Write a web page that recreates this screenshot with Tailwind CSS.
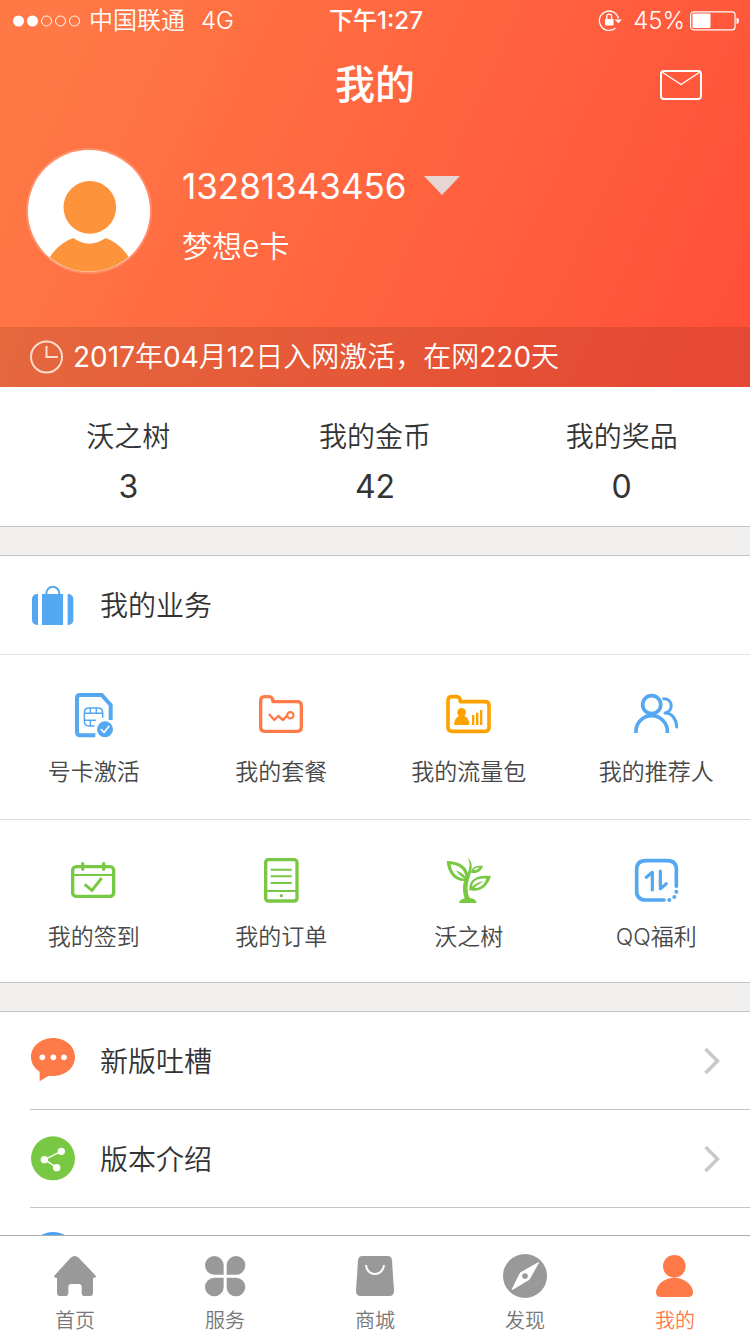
<!DOCTYPE html>
<html lang="zh-CN">
<head>
<meta charset="utf-8">
<meta name="viewport" content="width=device-width, initial-scale=1">
<title>我的</title>
<script src="https://cdn.jsdelivr.net/npm/@tailwindcss/browser@4"></script>
</head>
<body class="flex h-screen flex-col overflow-hidden bg-white font-['Inter','Noto_Sans_CJK_SC',sans-serif] font-[350] text-[#333333]">
<main class="min-h-0 flex-1 overflow-hidden">
  <header class="bg-[linear-gradient(115deg,#ff7946_6%,#ff5139_94%)] text-white">
    <!-- Status bar -->
    <div class="grid h-[42px] grid-cols-3 items-center pr-[10px] pl-3 text-2xl leading-10">
      <div class="flex items-center gap-2">
        <svg class="h-3 w-[69px]" viewBox="0 0 69 12" fill="none" stroke="#fff"><circle cx="6.500" cy="6" r="5.500" fill="#fff" stroke="none"/><circle cx="20.500" cy="6" r="5.500" fill="#fff" stroke="none"/><circle cx="34.500" cy="6" r="5"/><circle cx="48.500" cy="6" r="5"/><circle cx="62.500" cy="6" r="5"/></svg>
        <span class="whitespace-nowrap">中国联通</span>
        <span class="ml-2">4G</span>
      </div>
      <div class="text-center font-medium">下午1:27</div>
      <div class="flex items-center justify-end">
        <svg class="mr-[11px] h-6 w-6" viewBox="0 0 24 24" fill="none" stroke="#fff" stroke-width="1.300"><path d="M20.500 9.500A9.700 9.700 0 1 0 17.500 19" /><path d="M16.500 10.500h7.500l-3.700 3.800z" fill="#fff" stroke="none"/><rect x="7" y="10" width="8.500" height="6.500" fill="#fff" stroke="none"/><path d="M8.800 10V7.500a2.400 2.400 0 0 1 4.800 0V10"/></svg>
        <span class="mr-[5px]">45%</span>
        <svg class="h-5 w-[50px]" viewBox="0 0 50 20"><rect x=".600" y=".800" width="44.500" height="18" rx="3" fill="none" stroke="#fff" stroke-width="1.200"/><rect x="2.500" y="2.600" width="18" height="14.500" rx="1" fill="#fff"/><path d="M46.500 6.500c3.300 1 3.300 5.800 0 6.800z" fill="#fff"/></svg>
      </div>
    </div>
    <!-- Title bar -->
    <div class="grid h-[86px] grid-cols-3 items-center pr-[47px]">
      <span></span>
      <h1 class="ml-[47px] text-center text-[40px] leading-[56px] font-medium">我的</h1>
      <button type="button" aria-label="消息" class="justify-self-end">
        <svg class="h-8 w-11" viewBox="0 0 44 32" fill="none" stroke="#fff" stroke-width="2" stroke-linejoin="round"><rect x="2" y="2" width="40" height="28" rx="3"/><path d="M3 3l19 12.500L41 3" stroke-width="1.400"/></svg>
      </button>
    </div>
    <!-- Account -->
    <div class="flex items-start px-[26px] pt-5 pb-[53px]">
      <svg class="h-[126px] w-[126px] shrink-0" viewBox="0 0 378 378"><defs><clipPath id="face"><circle cx="189" cy="189" r="182"/></clipPath></defs><circle cx="189" cy="189" r="189" fill="#fff" fill-opacity=".2"/><circle cx="189" cy="189" r="183" fill="#fff"/><g fill="#fd933b"><circle cx="191.500" cy="178" r="79"/><path clip-path="url(#face)" d="M142 270Q190 304 239 270C272 282 295 305 311 332V390H69V332C85 305 108 282 142 270z"/></g></svg>
      <div class="ml-[30px] pt-[18px]">
        <button type="button" class="flex h-10 items-center gap-[17px] text-[35px] leading-10 font-normal">
          <span>13281343456</span>
          <svg class="h-5 w-9" viewBox="0 0 36 20"><path d="M0 0h36L18 19z" fill="#e6d5d2"/></svg>
        </button>
        <p class="mt-5 text-[30px] leading-10">梦想e卡</p>
      </div>
    </div>
    <div class="flex h-[60px] items-center gap-[10px] bg-black/10 px-[29px] text-[28px] leading-10">
      <svg class="h-[34px] w-[34px] shrink-0" viewBox="0 0 34 34" fill="none" stroke="#ffdcd0" stroke-width="2"><circle cx="17.500" cy="17" r="15.500"/><path d="M17.500 6v11h11.500"/></svg>
      <p><span class="font-normal">2017</span>年<span class="font-normal">04</span>月<span class="font-normal">12</span>日入网激活，在网<span class="font-normal">220</span>天</p>
    </div>
  </header>

  <section class="grid grid-cols-3 border-b border-[#c4c4c6] px-[5px] pt-[30px] pb-[19px] text-center leading-10">
    <a href="#" class="flex flex-col gap-[10px]"><span class="text-[28px]">沃之树</span><span class="text-[32px] font-normal">3</span></a>
    <a href="#" class="flex flex-col gap-[10px]"><span class="text-[28px]">我的金币</span><span class="text-[32px] font-normal">42</span></a>
    <a href="#" class="flex flex-col gap-[10px]"><span class="text-[28px]">我的奖品</span><span class="text-[32px] font-normal">0</span></a>
  </section>
  <div class="h-7 bg-[#f1f0ee]"></div>

  <section class="border-y border-[#c4c4c6]">
    <div class="flex h-[98px] items-center gap-6 px-[30px]">
      <svg class="h-[46px] w-[46px]" viewBox="90 36 138 138" fill="#54a7f1"><path d="M114 72v93h-3a15 15 0 0 1-15-15V87a15 15 0 0 1 15-15zM203 72v93h2a15 15 0 0 0 15-15V87a15 15 0 0 0-15-15zM126 72h63v93h-63z"/><path d="M139 76v-6a19 19 0 0 1 39 0v6" fill="none" stroke="#54a7f1" stroke-width="6"/></svg>
      <h2 class="pt-[2px] text-[28px] leading-10">我的业务</h2>
    </div>
    <div class="grid grid-cols-4 border-t border-[#e2e2e4] text-[23px] leading-7 text-[#484848]">
      <a href="#" class="flex flex-col items-center gap-5 pt-[35px] pb-[33px]">
        <svg class="h-12 w-12" viewBox="210 60 144 144" fill="none" stroke="#54a7f1"><path d="M286 196H240q-9 0-9-9V84q0-9 9-9h65l27 30v45" stroke-width="12"/><path d="M283 168h-16q-14 0-14-14v-26q0-14 14-14h27q14 0 14 14v15M253 130h55M253 151h35M271 114v16M289 114v16M271 151v17" stroke-width="4.500"/><circle cx="315" cy="178" r="24" fill="#54a7f1" stroke="none"/><path d="M302 177l10 10 16-19" stroke="#fff" stroke-width="5"/></svg>
        <span>号卡激活</span></a>
      <a href="#" class="flex flex-col items-center gap-5 pt-[35px] pb-[33px]">
        <svg class="h-12 w-12" viewBox="771 60 144 144" fill="none" stroke="#ff7a49" stroke-linejoin="round"><path d="M793 80h14q11 0 12 15h73q12 0 12 12v65q0 12-12 12h-98q-12 0-12-12V92q0-12 12-12z" stroke-width="10"/><path d="M807 132l16 18 12-12 14 12 13-14" stroke-width="7"/><circle cx="871" cy="136" r="9.500" stroke-width="6.500"/></svg>
        <span>我的套餐</span></a>
      <a href="#" class="flex flex-col items-center gap-5 pt-[35px] pb-[33px]">
        <svg class="h-12 w-12" viewBox="210 60 144 144" fill="none" stroke="#ffa200"><path d="M231 80h13q11 0 12 15h74q12 0 12 12v65q0 12-12 12h-99q-12 0-12-12V92q0-12 12-12z" stroke-width="11" stroke-linejoin="round"/><g fill="#ffa200" stroke="none"><circle cx="260" cy="127" r="13"/><path d="M237 165q2-22 15-27h16q14 5 15 27zM291 135h7v30h-7zM303 128h7v37h-7zM315 120h7v45h-7z"/></g></svg>
        <span>我的流量包</span></a>
      <a href="#" class="flex flex-col items-center gap-5 pt-[35px] pb-[33px]">
        <svg class="h-12 w-12" viewBox="771 60 144 144" fill="none" stroke="#54a7f1" stroke-width="11"><circle cx="830" cy="104" r="27"/><path d="M783 189v-5a47 47 0 0 1 94 0v5"/><path d="M866 86c28 0 30 36 6 43M870 129c21 0 34 18 35 42" stroke-width="9" stroke-linecap="round"/></svg>
        <span>我的推荐人</span></a>
    </div>
    <div class="grid grid-cols-4 border-t border-[#d9d9db] text-[23px] leading-7 text-[#484848]">
      <a href="#" class="flex flex-col items-center gap-5 pt-[35px] pb-[31px]">
        <svg class="h-12 w-12" viewBox="210 60 144 144" fill="none" stroke="#79c843"><rect x="218" y="95" width="123" height="89" rx="11" stroke-width="10"/><path d="M220 120h120" stroke-width="6"/><path d="M248 86v17M311 86v17" stroke-width="10" stroke-linecap="round"/><path d="M254 148l22 18 29-37" stroke-width="9"/></svg>
        <span>我的签到</span></a>
      <a href="#" class="flex flex-col items-center gap-5 pt-[35px] pb-[31px]">
        <svg class="h-12 w-12" viewBox="771 60 144 144" fill="none" stroke="#79c843"><rect x="797" y="74" width="94" height="124" rx="8" stroke-width="10"/><path d="M812 104h63M812 124h63M812 144h63M800 168h90" stroke-width="6"/><circle cx="844" cy="182" r="5" fill="#79c843" stroke="none"/></svg>
        <span>我的订单</span></a>
      <a href="#" class="flex flex-col items-center gap-5 pt-[35px] pb-[31px]">
        <svg class="h-12 w-12" viewBox="210 60 144 144" fill="#79c843"><path fill-rule="evenodd" d="M215 78C250 79 278 91 280 124Q281 131 278 137C247 144 218 122 215 78zM227 88C230 115 246 129 269 131 255 123 247 113 243 106 257 112 266 118 271 126 270 103 250 90 227 88z"/><path fill-rule="evenodd" d="M348 123C307 119 281 131 283 166 319 171 337 156 348 123zM334 131C306 129 291 140 292 155 301 146 313 140 326 138 315 146 304 152 298 159 316 159 327 150 334 131z"/><path fill-rule="evenodd" d="M324 93C300 89 290 98 288 113 307 117 318 109 324 93zM313 98C303 97 298 101 296 106 304 105 309 103 313 98z"/><path d="M279 68Q291 78 290 98C289 119 276 139 278 165Q279 184 286 190C297 190 304 197 305 204H252Q254 193 269 190C262 171 262 145 272 127 281 110 289 92 279 68z"/></svg>
        <span>沃之树</span></a>
      <a href="#" class="flex flex-col items-center gap-5 pt-[35px] pb-[31px]">
        <svg class="h-12 w-12" viewBox="771 60 144 144" fill="none" stroke="#54a7f1" stroke-linecap="round"><path d="M867 195h-55q-27 0-27-27v-64q0-27 27-27h65q27 0 27 27v50" stroke-width="11"/><path d="M814 127l18-15v53M856 108v53l18-15" stroke-width="9.500" stroke-linejoin="round"/><g fill="#54a7f1" stroke="none"><circle cx="904" cy="170" r="6"/><circle cx="898" cy="186" r="6"/><circle cx="883" cy="195" r="6"/></g></svg>
        <span>QQ福利</span></a>
    </div>
  </section>
  <div class="h-7 bg-[#f1f0ee]"></div>

  <section class="border-t border-[#c4c4c6] pl-[30px]">
    <a href="#" class="flex h-[98px] items-center gap-6 border-b border-[#c4c4c6] pr-[30px]">
      <svg class="h-[46px] w-[46px]" viewBox="90 114 138 138"><path d="M159 114c37 0 66 25 66 57s-29 57-66 57q-7 0-13-1l-27 17v-29C102 205 93 188 93 171c0-32 30-57 66-57z" fill="#ff7a49"/><g fill="#fff"><circle cx="127" cy="172" r="8.500"/><circle cx="160" cy="172" r="8.500"/><circle cx="192" cy="172" r="8.500"/></g></svg>
      <span class="flex-1 pt-[2px] text-[28px] leading-10">新版吐槽</span>
      <svg class="h-7 w-4" viewBox="0 0 16 28" fill="none" stroke="#c7c7cc" stroke-width="3.500"><path d="M1.500 2l12 12-12 12"/></svg>
    </a>
    <a href="#" class="flex h-[98px] items-center gap-6 border-b border-[#c4c4c6] pr-[30px]">
      <svg class="h-[46px] w-[46px]" viewBox="90 408 138 138"><circle cx="159" cy="475" r="66" fill="#79c843"/><path d="M183 454l-49 25 36 24" fill="none" stroke="#fff" stroke-width="4"/><g fill="#fff"><circle cx="184" cy="454" r="11"/><circle cx="133" cy="479" r="11"/><circle cx="170" cy="503" r="11"/></g></svg>
      <span class="flex-1 pt-[2px] text-[28px] leading-10">版本介绍</span>
      <svg class="h-7 w-4" viewBox="0 0 16 28" fill="none" stroke="#c7c7cc" stroke-width="3.500"><path d="M1.500 2l12 12-12 12"/></svg>
    </a>
    <div class="flex h-[98px] items-center">
      <svg class="h-[46px] w-[46px] overflow-visible" viewBox="0 0 46 46"><circle cx="23" cy="23" r="25" fill="#4a9ef0"/></svg>
    </div>
  </section>
</main>

<nav class="grid shrink-0 grid-cols-5 border-t border-[#adadad] bg-white text-xl leading-6 text-[#777777]">
  <a href="#" class="flex flex-col items-center gap-[9px] pt-4 pb-px">
    <svg class="h-12 w-12" viewBox="153 81 144 144" fill="#999"><path d="M212 98q12-10 24 0l51 54q4 6-8 7v44q0 10-10 10h-14q-10 0-10-10v-17q0-9-9-9h-22q-9 0-9 9v17q0 10-10 10h-14q-10 0-10-10v-44q-12-1-8-7z"/></svg>
    <span>首页</span></a>
  <a href="#" class="flex flex-col items-center gap-[9px] pt-4 pb-px">
    <svg class="h-12 w-12" viewBox="603 81 144 144" fill="#999"><path d="M671 149h-28a28 28 0 1 1 28-28zM680 149h27a28 28 0 1 0-27-28zM671 158h-28a28 28 0 1 0 28 28zM680 158h27a28 28 0 1 1-27 28z"/></svg>
    <span>服务</span></a>
  <a href="#" class="flex flex-col items-center gap-[9px] pt-4 pb-px">
    <svg class="h-12 w-12" viewBox="1053 81 144 144"><path d="M1088 93h74q13 0 14 13l6 92q0 15-14 15h-86q-14 0-14-15l6-92q1-13 14-13z" fill="#999"/><path d="M1098 120c2 36 51 36 54 0" fill="none" stroke="#fff" stroke-width="6"/></svg>
    <span>商城</span></a>
  <a href="#" class="flex flex-col items-center gap-[9px] pt-4 pb-px">
    <svg class="h-12 w-12" viewBox="378 81 144 144"><circle cx="450" cy="153" r="66" fill="#999"/><path d="M491 111l-53 30q-3 2-5 6l-23 46q0 3 3 1l49-29q3-2 4-5l26-47q1-3-1-2z" fill="#fff"/><circle cx="450" cy="153" r="8.500" fill="#999"/></svg>
    <span>发现</span></a>
  <a href="#" aria-current="page" class="flex flex-col items-center gap-[9px] pt-4 pb-px text-[#ff7a49]">
    <svg class="h-12 w-12" viewBox="828 81 144 144" fill="#ff7a49"><circle cx="898" cy="124" r="34"/><path d="M898 158c30 0 56 22 56 44q0 14-15 14h-81q-15 0-15-14c0-22 25-44 55-44z"/></svg>
    <span>我的</span></a>
</nav>
</body>
</html>
